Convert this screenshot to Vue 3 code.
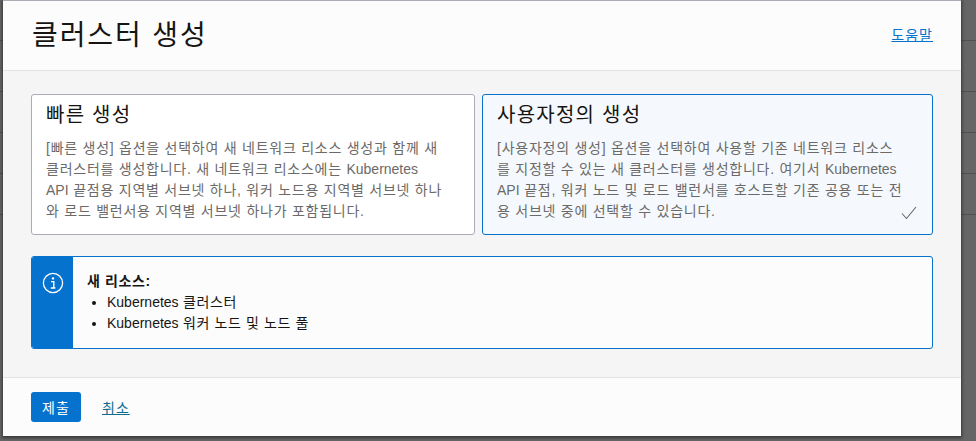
<script setup>
const split = (text) => text.split(/(Kubernetes|API)/).filter(Boolean)
const cards = [
  {
    title: '빠른 생성',
    lines: [
      '[빠른 생성] 옵션을 선택하여 새 네트워크 리소스 생성과 함께 새',
      '클러스터를 생성합니다. 새 네트워크 리소스에는 Kubernetes',
      'API 끝점용 지역별 서브넷 하나, 워커 노드용 지역별 서브넷 하나',
      '와 로드 밸런서용 지역별 서브넷 하나가 포함됩니다.'
    ],
    selected: false
  },
  {
    title: '사용자정의 생성',
    lines: [
      '[사용자정의 생성] 옵션을 선택하여 사용할 기존 네트워크 리소스',
      '를 지정할 수 있는 새 클러스터를 생성합니다. 여기서 Kubernetes',
      'API 끝점, 워커 노드 및 로드 밸런서를 호스트할 기존 공용 또는 전',
      '용 서브넷 중에 선택할 수 있습니다.'
    ],
    selected: true
  }
]
const rows = [41, 51, 41, 41, 41]
const items = ['Kubernetes 클러스터', 'Kubernetes 워커 노드 및 노드 풀']
</script>

<template>
  <div class="page">
    <div class="backdrop">
      <div v-for="(h, i) in rows" :key="i" class="bg-row" :style="{ height: h + 'px' }"></div>
    </div>
    <section class="modal">
      <header class="head">
        <h1>클러스터 생성</h1>
        <a class="help">도움말</a>
      </header>
      <main class="body">
        <div class="cards">
          <article v-for="c in cards" :key="c.title" class="card" :class="{ on: c.selected }">
            <h2>{{ c.title }}</h2>
            <p>
              <span v-for="l in c.lines" :key="l" class="ln">
                <span v-for="(part, i) in split(l)" :key="i" :class="{ latin: /^(Kubernetes|API)$/.test(part) }">{{ part }}</span>
              </span>
            </p>
            <svg v-if="c.selected" class="check" width="16" height="14" viewBox="0 0 16 14">
              <path d="M1 7.5 L5.5 12.5 L15 1" fill="none" stroke="#666" stroke-width="1.1" />
            </svg>
          </article>
        </div>
        <div class="info">
          <div class="info-side">
            <svg width="22" height="22" viewBox="0 0 22 22">
              <circle cx="11" cy="11" r="9.6" fill="none" stroke="#fff" stroke-width="1.3" />
              <circle cx="11" cy="6.4" r="1.2" fill="#fff" />
              <path d="M9 9.6h2.8v6.2M8.8 16h4.6" fill="none" stroke="#fff" stroke-width="1.4" />
            </svg>
          </div>
          <div class="info-main">
            <strong>새 리소스:</strong>
            <ul>
              <li v-for="it in items" :key="it">
                <span v-for="(part, i) in split(it)" :key="i" :class="{ latin: part === 'Kubernetes' }">{{ part }}</span>
              </li>
            </ul>
          </div>
        </div>
      </main>
      <footer class="foot">
        <button class="submit">제출</button>
        <a class="cancel">취소</a>
      </footer>
    </section>
  </div>
</template>

<style>
html, body { margin: 0; background: #666; }
</style>

<style scoped>
.page {
  position: relative;
  width: 976px;
  height: 441px;
  overflow: hidden;
  background: #666;
  font-family: "Liberation Sans", "Noto Sans CJK KR", sans-serif;
  font-size: 14px;
  color: #161513;
}
.backdrop { position: absolute; inset: 0; }
.bg-row { border-bottom: 1px solid #505050; box-sizing: border-box; }
.modal {
  position: absolute;
  left: 3px;
  top: 0;
  width: 958px;
  height: 436px;
  border-top: 1px solid #a9adb3;
  box-sizing: border-box;
  display: flex;
  flex-direction: column;
  background: #fcfcfc;
  box-shadow: 0 1px 3px 1px rgba(0, 0, 0, .45);
}
.head {
  height: 69px;
  flex: none;
  border-bottom: 1px solid #e4e4e4;
  display: flex;
  align-items: center;
  justify-content: space-between;
  padding: 0 28px;
}
h1 { margin: 0 0 0 1px; font-size: 28px; font-weight: 400; line-height: 36px; letter-spacing: 1.9px; }
.help { color: #0572ce; text-decoration: underline; letter-spacing: 1px; margin: 0 0 3px 0; }
.body {
  flex: 1;
  background: #f5f5f5;
  padding: 23px 28px 0;
}
.cards { display: grid; grid-template-columns: 444px 451px; gap: 7px; }
.card {
  position: relative;
  height: 141px;
  box-sizing: border-box;
  border: 1px solid #a9adb8;
  border-radius: 3px;
  background: #fff;
  padding: 7px 14px 0;
}
.card.on { border-color: #0572ce; background: #f5f9fe; }
h2 { margin: 0; font-size: 20px; font-weight: 400; line-height: 27px; letter-spacing: 1.25px; }
p { margin: 9px 0 0; color: #6b6a68; line-height: 21px; letter-spacing: .75px; }
.ln { display: block; white-space: nowrap; }
.latin { letter-spacing: 0; }
.check { position: absolute; right: 15px; bottom: 14px; }
.info {
  margin-top: 21px;
  width: 902px;
  height: 93px;
  box-sizing: border-box;
  border: 1px solid #0572ce;
  border-radius: 3px;
  background: #fcfcfc;
  display: flex;
  overflow: hidden;
}
.info-side {
  width: 41px;
  flex: none;
  background: #0572ce;
  display: flex;
  justify-content: center;
  padding-top: 15px;
  box-sizing: border-box;
}
.info-main { padding: 14px 0 0 14px; line-height: 21px; color: #161513; letter-spacing: .6px; }
strong { display: block; font-weight: 700; }
ul { margin: 0; padding-left: 20px; }
.foot {
  height: 59px;
  flex: none;
  border-top: 1px solid #e4e4e4;
  box-sizing: border-box;
  background: #fcfcfc;
  display: flex;
  align-items: center;
  padding: 0 28px;
  gap: 21px;
}
.submit {
  width: 50px;
  height: 30px;
  border: 0;
  border-radius: 3px;
  background: #0572ce;
  color: #fff;
  font: inherit;
  letter-spacing: 1px;
  padding: 0;
}
.cancel { color: #0f6b8f; text-decoration: underline; letter-spacing: 1px; }
</style>
